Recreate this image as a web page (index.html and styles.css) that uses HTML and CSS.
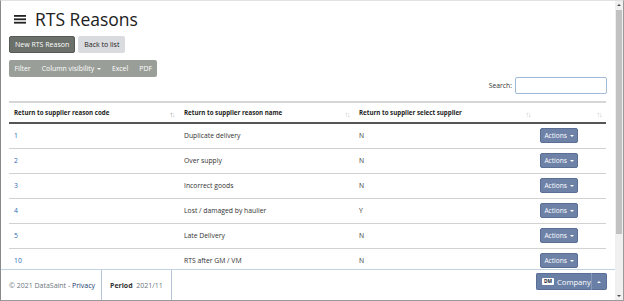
FILE: index.html
```html
<!DOCTYPE html>
<html lang="en">
<head>
<meta charset="utf-8">
<title>RTS Reasons</title>
<link rel="stylesheet" href="styles.css">
</head>
<body>
<div class="frame">
  <div class="viewport">
    <main class="content">
      <h1 class="page-title">
        <svg class="hamburger" width="12" height="9" viewBox="0 0 12 9"><rect x="0" y="0" width="12" height="1.8" fill="#222"/><rect x="0" y="3.4" width="12" height="1.8" fill="#222"/><rect x="0" y="6.8" width="12" height="1.8" fill="#222"/></svg>
        <span>RTS Reasons</span>
      </h1>
      <div class="top-actions">
        <button class="btn btn-dark">New RTS Reason</button>
        <button class="btn btn-light">Back to list</button>
      </div>
      <div class="dt-buttons">
        <button class="btn-grp">Filter</button>
        <button class="btn-grp">Column visibility <span class="caret"></span></button>
        <button class="btn-grp">Excel</button>
        <button class="btn-grp">PDF</button>
      </div>
      <div class="dt-search">
        <label>Search:</label>
        <input type="text" class="search-input">
      </div>
      <table class="data">
        <colgroup>
          <col class="c1"><col class="c2"><col class="c3"><col class="c4">
        </colgroup>
        <thead>
          <tr>
            <th>Return to supplier reason code <span class="sort"><span class="on">↑</span>↓</span></th>
            <th>Return to supplier reason name <span class="sort">↑↓</span></th>
            <th>Return to supplier select supplier <span class="sort">↑↓</span></th>
            <th><span class="sort">↑↓</span></th>
          </tr>
        </thead>
        <tbody>
          <tr><td><a href="#">1</a></td><td>Duplicate delivery</td><td>N</td><td><button class="btn-act">Actions <span class="caret"></span></button></td></tr>
          <tr><td><a href="#">2</a></td><td>Over supply</td><td>N</td><td><button class="btn-act">Actions <span class="caret"></span></button></td></tr>
          <tr><td><a href="#">3</a></td><td>Incorrect goods</td><td>N</td><td><button class="btn-act">Actions <span class="caret"></span></button></td></tr>
          <tr><td><a href="#">4</a></td><td>Lost / damaged by haulier</td><td>Y</td><td><button class="btn-act">Actions <span class="caret"></span></button></td></tr>
          <tr><td><a href="#">5</a></td><td>Late Delivery</td><td>N</td><td><button class="btn-act">Actions <span class="caret"></span></button></td></tr>
          <tr><td><a href="#">10</a></td><td>RTS after GM / VM</td><td>N</td><td><button class="btn-act">Actions <span class="caret"></span></button></td></tr>
        </tbody>
      </table>
    </main>
    <footer class="footer">
      <div class="f-sec f-copy"><span>© 2021 DataSaint - <a href="#">Privacy</a></span></div>
      <div class="f-sec f-period"><span><b>Period</b>&nbsp; 2021/11</span></div>
      <div class="f-spacer"></div>
      <div class="company">
        <button class="company-main"><span class="dm">DM</span>Company</button>
        <button class="company-caret"><span class="caret-up"></span></button>
      </div>
    </footer>
  </div>
  <div class="scrollbar">
    <div class="sb-arrow sb-up"></div>
    <div class="sb-thumb"></div>
    <div class="sb-fill"></div>
    <div class="sb-arrow sb-down"></div>
  </div>
</div>
</body>
</html>
```
FILE: styles.css
```css
* { box-sizing: border-box; }
html, body { margin: 0; padding: 0; overflow: hidden; background: #fff; }
body { font-family: "Open Sans", "Noto Sans", sans-serif; color: #333; }

.frame {
  width: 624px; height: 301px;
  display: flex;
  border-left: 1px solid #8a8a8a;
  border-right: 1px solid #9a9a9a;
  border-bottom: 1px solid #9a9a9a;
  border-top: 1px solid #e2e2e2;
}
.viewport { flex: 1; display: flex; flex-direction: column; min-width: 0; }
.content { flex: 1; overflow: hidden; padding: 8px 8px 0 8px; }

.page-title {
  margin: 0; height: 20px; display: flex; align-items: center;
  font-size: 17.5px; font-weight: 500; line-height: 20px; color: #212121;
}
.hamburger { margin: 1px 9px 0 5px; display: block; }

.top-actions { display: flex; gap: 3px; margin-top: 7px; }
.btn {
  font-family: inherit; font-size: 7px; height: 17px; padding: 0 5px;
  border-radius: 2px; cursor: pointer; line-height: 15px; white-space: nowrap;
}
.btn-dark { background: #6b706b; color: #fff; border: 1px solid #555a55; }
.btn-light { background: #dadbde; color: #222; border: 1px solid #dadbde; }

.dt-buttons { display: inline-flex; margin-top: 7px; background: #9a9e99; border-radius: 2px; height: 17px; }
.btn-grp {
  font-family: inherit; font-size: 6.9px; color: #fff; background: transparent;
  border: 0; padding: 0 5.5px; height: 17px; line-height: 17px; white-space: nowrap;
}
.caret {
  display: inline-block; width: 0; height: 0; vertical-align: 1px;
  border-left: 2.2px solid transparent; border-right: 2.2px solid transparent;
  border-top: 2.4px solid #fff; margin-left: 1px;
}

.dt-search { display: flex; justify-content: flex-end; align-items: center; gap: 3px; height: 17px; }
.dt-search label { font-size: 6.8px; color: #333; }
.search-input { width: 92px; height: 17px; border: 1px solid #9fb9d9; border-radius: 2px; padding: 0; }

.data {
  width: 597px; table-layout: fixed; border-collapse: collapse; margin-top: 7px;
  border-top: 2px solid #d6d6d6; font-size: 6.8px;
}
.data col.c1 { width: 170px; }
.data col.c2 { width: 175px; }
.data col.c3 { width: 181px; }
.data col.c4 { width: 71px; }
.data th {
  text-align: left; font-weight: 700; color: #222; height: 21px; padding: 0 5px;
  border-bottom: 2px solid #555; position: relative; font-size: 6.2px;
}
.sort { position: absolute; right: 5px; top: 6px; color: #c8c8c8; font-weight: 400; font-size: 7.5px; letter-spacing: -1.5px; }
.sort .on { color: #888; }
.data td { padding: 4px 5px 5px; line-height: 15px; vertical-align: top; border-bottom: 1px solid #d2d2d2; height: 25px; color: #333; }
.data td a { color: #2d6bb3; text-decoration: none; }

.btn-act {
  font-family: inherit; font-size: 6.6px; color: #fff; background: #6e82a8;
  border: 1px solid #5b6f95; border-radius: 2px; height: 15px; width: 38px; padding: 0; line-height: 13px;
}

.footer {
  height: 31px; flex: none; display: flex; align-items: stretch;
  border-top: 1px solid #c3d2e2; font-size: 7px; padding-right: 8px;
}
.f-sec { display: flex; align-items: center; padding: 1px 8px 0; border-right: 1px solid #b5c4d6; color: #6c757d; white-space: nowrap; }
.f-copy { width: 101px; }
.f-period { width: 70px; }
.f-copy a { color: #1b3b6f; text-decoration: none; }
.f-period b { color: #333; font-weight: 700; }
.f-spacer { flex: 1; }
.company { display: flex; align-self: flex-start; margin-top: 3px; height: 17px; }
.company-main {
  font-family: inherit; font-size: 7.6px; color: #fff; background: #6a7fa6;
  border: 1px solid #5b6f96; border-right: 0; border-radius: 2px 0 0 2px;
  height: 17px; width: 55px; padding: 0 0 0 5px; display: flex; align-items: center; gap: 3px;
}
.dm { background: #fff; color: #223; font-size: 4.8px; font-weight: 700; padding: 0 2px; line-height: 7px; border-radius: 1px; }
.company-caret {
  background: #6a7fa6; border: 1px solid #5b6f96; border-left: 1px solid #8799bb;
  border-radius: 0 2px 2px 0; width: 16px; height: 17px; padding: 0;
  display: flex; align-items: center; justify-content: center;
}
.caret-up { width: 0; height: 0; border-left: 2.2px solid transparent; border-right: 2.2px solid transparent; border-bottom: 2.4px solid #fff; }

.scrollbar { width: 8px; flex: none; background: #f0f0f0; display: flex; flex-direction: column; align-items: center; }
.sb-arrow { height: 9px; width: 100%; position: relative; }
.sb-up::after, .sb-down::after { content: ""; position: absolute; left: 2px; width: 0; height: 0; border-left: 2px solid transparent; border-right: 2px solid transparent; }
.sb-up::after { top: 3px; border-bottom: 2px solid #505050; }
.sb-down::after { bottom: 3px; border-top: 2px solid #505050; }
.sb-thumb { width: 6px; height: 224px; background: #c1c1c1; }
.sb-fill { flex: 1; }
```
